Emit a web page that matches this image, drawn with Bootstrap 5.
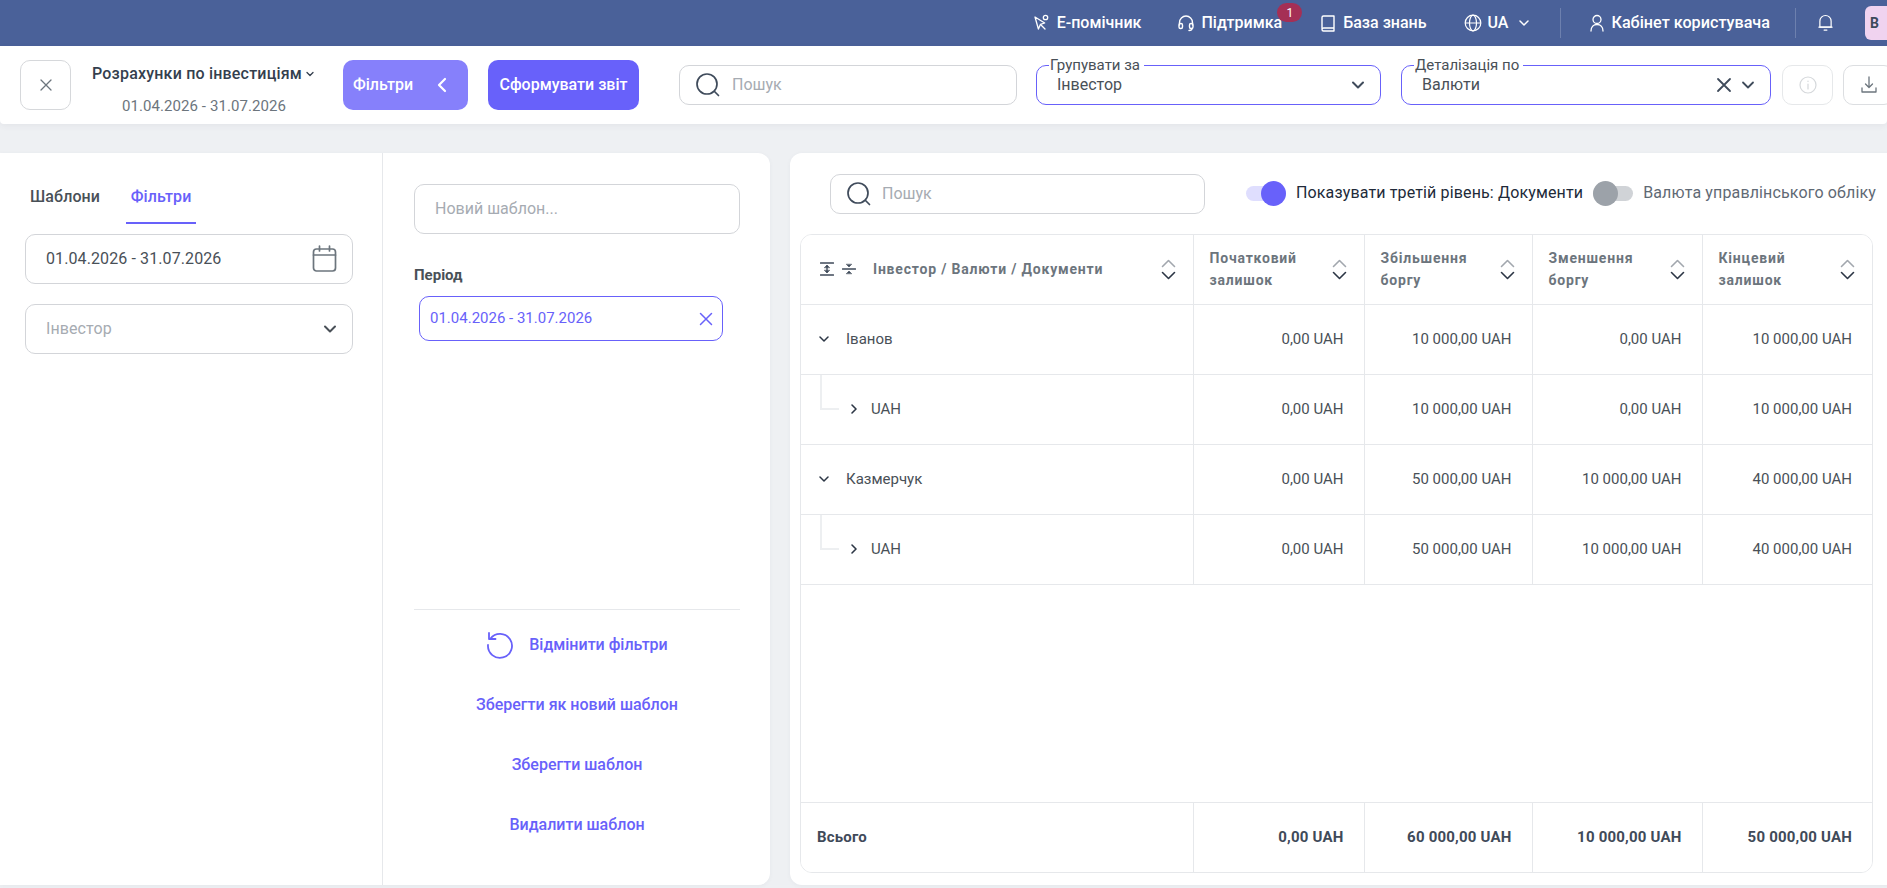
<!DOCTYPE html>
<html lang="uk">
<head>
<meta charset="utf-8">
<title>Розрахунки по інвестиціям</title>
<link href="https://cdn.jsdelivr.net/npm/bootstrap@5.3.0/dist/css/bootstrap.min.css" rel="stylesheet">
<style>
html,body{height:888px;overflow:hidden}
body{width:1887px;background:#eef0f3;font-family:Roboto,"Liberation Sans",sans-serif;font-size:15px;color:#495057}
svg{display:block;flex:none;fill:none;stroke:currentColor;stroke-linecap:round;stroke-linejoin:round}
.topnav{height:46px;background:#4a6199;color:#fff;font-weight:500;font-size:16px;padding:0}
.topnav .tn-item{display:flex;align-items:center;gap:6px;color:#fff;white-space:nowrap}
.topnav .tn-wide{font-size:16.2px}
.tn-badge{top:-8px;left:100px;width:25px;height:19px;border-radius:10px;background:#a52f55;color:#fff;font-size:12px;font-weight:400;display:flex;align-items:center;justify-content:center}
.tn-sep{width:1px;height:30px;background:#6d80ae}
.tn-avatar{width:36px;height:34px;border-radius:6px;background:#f0d3f0;color:#3d4a5c;font-weight:700;font-size:14px;display:flex;align-items:center;padding-left:5px;margin-right:-14px;margin-left:32px}
.toolbar{height:78px;background:#fff;padding-left:20px;box-shadow:0 2px 6px rgba(60,70,90,.06);border-radius:0 0 4px 4px;position:relative;flex-wrap:nowrap}
.toolbar>*{flex:none}
.tile{width:51px;height:50px;border:1px solid #d6d8db;border-radius:10px;background:#fff;color:#6c757d;display:flex;align-items:center;justify-content:center}
.tile-sm{height:40px;border-color:#dcdee1}
.title-box{width:231px;margin-left:21px;height:50px;text-align:center;display:flex;flex-direction:column;justify-content:space-between;padding:4px 0 0 0}
.title-main{font-weight:500;font-size:16px;letter-spacing:.2px;color:#343f4e;display:flex;align-items:center;gap:3px;line-height:20px;white-space:nowrap}
.title-date{color:#6c757d;line-height:20px;margin-bottom:-6px;padding-right:7px;font-size:15px;letter-spacing:.08px}
.act-btn{height:50px;border:0;border-radius:10px;color:#fff;font-weight:500;font-size:16px;padding:0 10px;white-space:nowrap}
.act-light{width:125px;background:#8680fb;margin-left:20px;margin-right:20px;display:flex;align-items:center;justify-content:space-between}
.act-main{width:151px;background:#6861fa}
.fld{border:1px solid #d3d5d9;border-radius:10px;background:#fff;display:flex;align-items:center}
.fld input{border:0;outline:0;padding:0;background:transparent;font-size:16px;width:100%;min-width:0;box-shadow:none;border-radius:0;color:#495057}
.fld input::placeholder{color:#a6abb2;opacity:1}
.hint{color:#a6abb2}
.fld-search{height:40px;width:338px;padding-left:15px;gap:11px;margin-left:40px;color:#3f4b5b}
.fld-acc{height:40px;border-color:#6861fa;padding:0 14px 0 20px;font-size:16px;color:#495057;justify-content:space-between}
.fld-legend{top:-9px;left:12px;background:#fff;padding:0 4px 0 1px;font-size:15px;line-height:16px;color:#495057}
.panel{background:#fff;height:732px;box-shadow:0 1px 4px rgba(60,70,90,.05)}
.panel-left{width:770px;border-radius:0 12px 12px 0}
.pane-a{width:383px;border-right:1px solid #e6e8eb;padding:0 0 0 25px}
.pane-b{flex:1;padding:31px 30px 0 31px}
.tabbar{height:71px;align-items:flex-end;gap:0;margin-left:0}
.tab-i{font-weight:500;font-size:16px;letter-spacing:.1px;line-height:20px;height:71px;padding-top:34px;color:#495057}
.tab-i.on{color:#6861fa;border-bottom:2px solid #6861fa;width:70px;text-align:center;margin-left:26px}
.fld-l{height:50px;width:328px;padding:0 14px 0 20px;font-size:16px;letter-spacing:.1px;justify-content:space-between}
.chip{width:304px;height:45px;margin:11px 0 0 5px;border:1px solid #6861fa;border-radius:10px;color:#6861fa;display:flex;align-items:center;justify-content:space-between;padding:0 9px 0 10px;font-size:15px}
.lnk-row{height:60px;display:flex;align-items:center;justify-content:center;gap:15px;color:#6861fa;font-weight:500;font-size:16px}
.panel-right{width:1120px;border-radius:12px 0 0 12px;padding:21px 0 0 10px}
.topline{height:60px;padding-left:30px;align-items:flex-start}
.fld-s2{height:40px;width:375px;padding-left:15px;gap:10px;color:#3f4b5b}
.sw{width:40px;height:15px;border-radius:8px;position:relative;flex:none;margin-top:12px}
.sw i{position:absolute;top:-5px;width:25px;height:25px;border-radius:50%}
.sw-on{background:#dfdefe;margin-left:41px}
.sw-on i{right:0;background:#6861fa}
.sw-off{background:#d0d3d7;margin-left:10px}
.sw-off i{left:0;background:#9ca2a9}
.sw-text{font-size:16px;letter-spacing:.14px;line-height:20px;margin-top:9px;margin-left:10px;white-space:nowrap;color:#212a39}
.sw-text.dim{color:#5f6974}
.tbl-wrap{width:1073px;height:639px;border:1px solid #e6e8eb;border-radius:12px;overflow:hidden}
.rep{table-layout:fixed;width:1071px;margin:0;border-collapse:collapse;color:#495057;font-size:15px}
.rep td,.rep th{border:0;border-bottom:1px solid #e6e8eb;padding:0 20px 0 16px;vertical-align:middle;box-shadow:none;background:#fff;color:inherit}
.rep tr>*+*{border-left:1px solid #e6e8eb}
.rep th{font-size:14px;font-weight:700;letter-spacing:.8px;line-height:22px;color:#6c757d}
.rep .rw{height:70px}
.rep .rw td+td{text-align:right}
.rep .gap td{border-left:0;height:218px}
.rep .foot td{font-weight:700;border-bottom:0;color:#3f4a59;height:70px;letter-spacing:.2px}
.rep .foot td+td{text-align:right}
.hcell{display:flex;align-items:center;justify-content:space-between}
.lvl-1{display:flex;align-items:center;gap:17px;padding-left:2px}
.lvl-2{display:flex;align-items:center;gap:13px;padding-left:33px;height:69px;position:relative}
.tree{position:absolute;left:3px;top:0;width:19px;height:35px;border-left:2px solid #edeff1;border-bottom:2px solid #edeff1}
.sort{display:flex;flex-direction:column;gap:3px;flex:none}
.sort svg:first-child{color:#a2a7ae}
.sort svg:last-child{color:#2c3645}
.ico-solid{fill:currentColor}
</style>
</head>
<body>
<nav class="navbar topnav d-flex justify-content-end flex-nowrap">
  <a class="tn-item text-decoration-none" style="margin-right:36px" href="#">
    <svg width="18" height="18" viewBox="0 0 18 18" stroke-width="1.3"><path d="M2 3l3.4 12 2-4.6 4.3-1.4z"/><path d="M8 11l4 4"/><circle cx="12.5" cy="3.5" r="2.2"/></svg>Е-помічник</a>
  <a class="tn-item text-decoration-none position-relative" style="margin-right:37px" href="#">
    <svg width="18" height="18" viewBox="0 0 18 18" stroke-width="1.4"><path d="M2.5 11V8.500a6.500 6.500 0 0 1 13 0V11"/><rect x="2" y="9.500" width="3.500" height="5" rx="1.500"/><rect x="12.500" y="9.500" width="3.500" height="5" rx="1.500"/><path d="M15 14.500c0 1.500-1.500 2-3 2"/></svg>Підтримка
    <span class="tn-badge position-absolute">1</span></a>
  <a class="tn-item text-decoration-none" style="margin-right:37px" href="#">
    <svg width="18" height="18" viewBox="0 0 18 18" stroke-width="1.4"><path d="M3 14.500V3.500A1.500 1.500 0 0 1 4.500 2H15v12H4.500A1.500 1.500 0 0 0 3 15.500 1.500 1.500 0 0 0 4.500 17H15v-3"/></svg>База знань</a>
  <a class="tn-item text-decoration-none" style="margin-right:30px" href="#">
    <svg width="18" height="18" viewBox="0 0 18 18" stroke-width="1.2"><circle cx="9" cy="9" r="7.800"/><ellipse cx="9" cy="9" rx="3.500" ry="7.800"/><path d="M1.500 9h15"/></svg>UA
    <svg class="ms-1" width="12" height="12" viewBox="0 0 12 12" stroke-width="1.5"><path d="M2 4l4 4 4-4"/></svg></a>
  <span class="tn-sep" style="margin-right:28px"></span>
  <a class="tn-item tn-wide text-decoration-none" style="margin-right:25px" href="#">
    <svg width="16" height="18" viewBox="0 0 16 18" stroke-width="1.3"><circle cx="8" cy="5.500" r="4"/><path d="M2 17c0-4 2.500-6.500 6-6.500s6 2.500 6 6.500"/></svg>Кабінет користувача</a>
  <span class="tn-sep" style="margin-right:22px"></span>
  <a class="tn-item text-decoration-none" href="#">
    <svg width="15" height="20" viewBox="0 0 16 20" stroke-width="1.3"><path d="M2 14.500V8a6 6 0 0 1 12 0v6.500z"/><path d="M1 14.500h14M6.500 17.500h3"/></svg></a>
  <span class="tn-avatar">B</span>
</nav>

<div class="toolbar d-flex align-items-center">
  <button class="tile p-0" type="button" aria-label="Закрити"><svg width="14" height="14" viewBox="0 0 14 14" stroke-width="1.3"><path d="M2 2l10 10M12 2L2 12"/></svg></button>
  <div class="title-box">
    <div class="title-main">Розрахунки по інвестиціям<svg width="10" height="10" viewBox="0 0 10 10" stroke-width="1.300"><path d="M2 3.500l3 3 3-3"/></svg></div>
    <div class="title-date">01.04.2026 - 31.07.2026</div>
  </div>
  <button class="act-btn act-light" type="button">Фільтри<svg style="margin-right:10px" width="12" height="18" viewBox="0 0 12 18" stroke-width="2.200"><path d="M9 3L3 9l6 6"/></svg></button>
  <button class="act-btn act-main" type="button">Сформувати звіт</button>
  <div class="fld fld-search">
    <svg width="26" height="26" viewBox="0 0 26 26" stroke-width="1.700"><circle cx="12" cy="12" r="10"/><path d="M19.500 19.500l4 4"/></svg>
    <input type="text" placeholder="Пошук">
  </div>
  <div class="fld fld-acc position-relative" style="width:345px;margin-left:19px">
    <span class="fld-legend position-absolute">Групувати за</span>
    <span>Інвестор</span>
    <svg width="16" height="16" viewBox="0 0 16 16" stroke-width="2" style="color:#3f4b5b"><path d="M3 5.500l5 5 5-5"/></svg>
  </div>
  <div class="fld fld-acc position-relative" style="width:370px;margin-left:20px">
    <span class="fld-legend position-absolute">Деталізація по</span>
    <span>Валюти</span>
    <span class="d-flex align-items-center gap-2" style="color:#3f4b5b">
      <svg width="16" height="16" viewBox="0 0 16 16" stroke-width="1.800"><path d="M2 2l12 12M14 2L2 14"/></svg>
      <svg width="16" height="16" viewBox="0 0 16 16" stroke-width="1.800"><path d="M3 5.500l5 5 5-5"/></svg>
    </span>
  </div>
  <button class="tile tile-sm p-0" type="button" style="margin-left:11px;color:#d5d8db;border-color:#e6e8ea" aria-label="Інформація"><svg width="18" height="18" viewBox="0 0 18 18" stroke-width="1.200"><circle cx="9" cy="9" r="8"/><path d="M9 8v5M9 5v.5"/></svg></button>
  <button class="tile tile-sm p-0" type="button" style="margin-left:10px" aria-label="Завантажити"><svg width="16" height="18" viewBox="0 0 16 18" stroke-width="1.300"><path d="M8 1v10M4.500 8L8 11.500 11.500 8M1 12v4h14v-4"/></svg></button>
</div>

<main class="d-flex flex-nowrap" style="gap:20px;padding-top:29px;width:1910px">
  <section class="panel panel-left d-flex flex-none">
    <div class="pane-a">
      <div class="d-flex tabbar">
        <span class="tab-i" style="padding-left:5px">Шаблони</span>
        <span class="tab-i on">Фільтри</span>
      </div>
      <div class="fld fld-l" style="margin-top:10px">
        <span>01.04.2026 - 31.07.2026</span>
        <svg width="27" height="28" viewBox="0 0 26 28" stroke-width="1.700" style="color:#6c757d"><rect x="2" y="4" width="22" height="22" rx="3"/><path d="M2 10h22M8 1v5M18 1v5"/></svg>
      </div>
      <div class="fld fld-l" style="margin-top:20px">
        <span class="hint">Інвестор</span>
        <svg width="16" height="16" viewBox="0 0 16 16" stroke-width="2"><path d="M3 5.500l5 5 5-5"/></svg>
      </div>
    </div>
    <div class="pane-b d-flex flex-column">
      <div class="fld" style="height:50px;padding-left:20px"><input type="text" placeholder="Новий шаблон..."></div>
      <div class="fw-bold" style="margin-top:31px;line-height:20px">Період</div>
      <div class="chip">
        <span>01.04.2026 - 31.07.2026</span>
        <svg width="14" height="14" viewBox="0 0 14 14" stroke-width="1.500"><path d="M1.500 1.500l11 11M12.500 1.500l-11 11"/></svg>
      </div>
      <div style="margin-top:268px;border-top:1px solid #e6e8eb;padding-top:5px">
        <div class="lnk-row">
          <svg width="28" height="28" viewBox="0 0 28 28" stroke-width="1.800"><path d="M4.500 7.500A12 12 0 1 1 2 14"/><path d="M3 2v6h6.500"/></svg>
          <span>Відмінити фільтри</span>
        </div>
        <div class="lnk-row">Зберегти як новий шаблон</div>
        <div class="lnk-row">Зберегти шаблон</div>
        <div class="lnk-row">Видалити шаблон</div>
      </div>
    </div>
  </section>

  <section class="panel panel-right flex-none">
    <div class="d-flex topline">
      <div class="fld fld-s2">
        <svg width="26" height="26" viewBox="0 0 26 26" stroke-width="1.700"><circle cx="12" cy="12" r="10"/><path d="M19.500 19.500l4 4"/></svg>
        <input type="text" placeholder="Пошук">
      </div>
      <span class="sw sw-on"><i></i></span>
      <span class="sw-text">Показувати третій рівень: Документи</span>
      <span class="sw sw-off"><i></i></span>
      <span class="sw-text dim">Валюта управлінського обліку</span>
    </div>
    <div class="tbl-wrap">
      <table class="table rep">
        <colgroup><col style="width:392px"><col style="width:171px"><col style="width:168px"><col style="width:170px"><col style="width:170px"></colgroup>
        <thead>
          <tr style="height:69px">
            <th style="padding-left:19px;padding-right:17px"><div class="hcell">
              <span class="d-flex align-items-center">
                <svg width="14" height="14" viewBox="0 0 14 14" stroke-width="1.300" style="color:#3f4a59"><path d="M0.500 1h13M0.500 13h13M7 4v6"/><path class="ico-solid" stroke-width=".6" d="M4.500 5.500L7 3l2.500 2.500zM4.500 8.500L7 11l2.500-2.500z"/></svg>
                <svg class="ms-2" width="14" height="14" viewBox="0 0 14 14" stroke-width="1.300" style="color:#3f4a59"><path d="M0.500 7h13"/><path class="ico-solid" stroke-width=".6" d="M4.500 2.500L7 5l2.500-2.500zM4.500 11.500L7 9l2.500 2.500z"/></svg>
                <span style="margin-left:17px">Інвестор / Валюти / Документи</span>
              </span>
              <span class="sort"><svg width="15" height="9" viewBox="0 0 15 9" stroke-width="1.600"><path d="M1.500 7.500l6-6 6 6"/></svg><svg width="15" height="9" viewBox="0 0 15 9" stroke-width="1.600"><path d="M1.500 1.500l6 6 6-6"/></svg></span>
            </div></th>
            <th><div class="hcell"><span>Початковий<br>залишок</span><span class="sort" style="margin-right:-3px"><svg width="15" height="9" viewBox="0 0 15 9" stroke-width="1.600"><path d="M1.500 7.500l6-6 6 6"/></svg><svg width="15" height="9" viewBox="0 0 15 9" stroke-width="1.600"><path d="M1.500 1.500l6 6 6-6"/></svg></span></div></th>
            <th><div class="hcell"><span>Збільшення<br>боргу</span><span class="sort" style="margin-right:-3px"><svg width="15" height="9" viewBox="0 0 15 9" stroke-width="1.600"><path d="M1.500 7.500l6-6 6 6"/></svg><svg width="15" height="9" viewBox="0 0 15 9" stroke-width="1.600"><path d="M1.500 1.500l6 6 6-6"/></svg></span></div></th>
            <th><div class="hcell"><span>Зменшення<br>боргу</span><span class="sort" style="margin-right:-3px"><svg width="15" height="9" viewBox="0 0 15 9" stroke-width="1.600"><path d="M1.500 7.500l6-6 6 6"/></svg><svg width="15" height="9" viewBox="0 0 15 9" stroke-width="1.600"><path d="M1.500 1.500l6 6 6-6"/></svg></span></div></th>
            <th><div class="hcell"><span>Кінцевий<br>залишок</span><span class="sort" style="margin-right:-3px"><svg width="15" height="9" viewBox="0 0 15 9" stroke-width="1.600"><path d="M1.500 7.500l6-6 6 6"/></svg><svg width="15" height="9" viewBox="0 0 15 9" stroke-width="1.600"><path d="M1.500 1.500l6 6 6-6"/></svg></span></div></th>
          </tr>
        </thead>
        <tbody>
          <tr class="rw">
            <td><div class="lvl-1"><svg width="10" height="10" viewBox="0 0 10 10" stroke-width="1.500" style="color:#2c3645"><path d="M1 3l4 4 4-4"/></svg>Іванов</div></td>
            <td>0,00 UAH</td><td>10 000,00 UAH</td><td>0,00 UAH</td><td>10 000,00 UAH</td>
          </tr>
          <tr class="rw">
            <td><div class="lvl-2"><span class="tree"></span><svg width="8" height="12" viewBox="0 0 8 12" stroke-width="1.600" style="color:#2c3645"><path d="M2 2l4 4-4 4"/></svg>UAH</div></td>
            <td>0,00 UAH</td><td>10 000,00 UAH</td><td>0,00 UAH</td><td>10 000,00 UAH</td>
          </tr>
          <tr class="rw">
            <td><div class="lvl-1"><svg width="10" height="10" viewBox="0 0 10 10" stroke-width="1.500" style="color:#2c3645"><path d="M1 3l4 4 4-4"/></svg>Казмерчук</div></td>
            <td>0,00 UAH</td><td>50 000,00 UAH</td><td>10 000,00 UAH</td><td>40 000,00 UAH</td>
          </tr>
          <tr class="rw">
            <td><div class="lvl-2"><span class="tree"></span><svg width="8" height="12" viewBox="0 0 8 12" stroke-width="1.600" style="color:#2c3645"><path d="M2 2l4 4-4 4"/></svg>UAH</div></td>
            <td>0,00 UAH</td><td>50 000,00 UAH</td><td>10 000,00 UAH</td><td>40 000,00 UAH</td>
          </tr>
          <tr class="gap"><td colspan="5"></td></tr>
          <tr class="foot">
            <td>Всього</td><td>0,00 UAH</td><td>60 000,00 UAH</td><td>10 000,00 UAH</td><td>50 000,00 UAH</td>
          </tr>
        </tbody>
      </table>
    </div>
  </section>
</main>
<script src="https://cdn.jsdelivr.net/npm/bootstrap@5.3.0/dist/js/bootstrap.bundle.min.js"></script>
</body>
</html>
